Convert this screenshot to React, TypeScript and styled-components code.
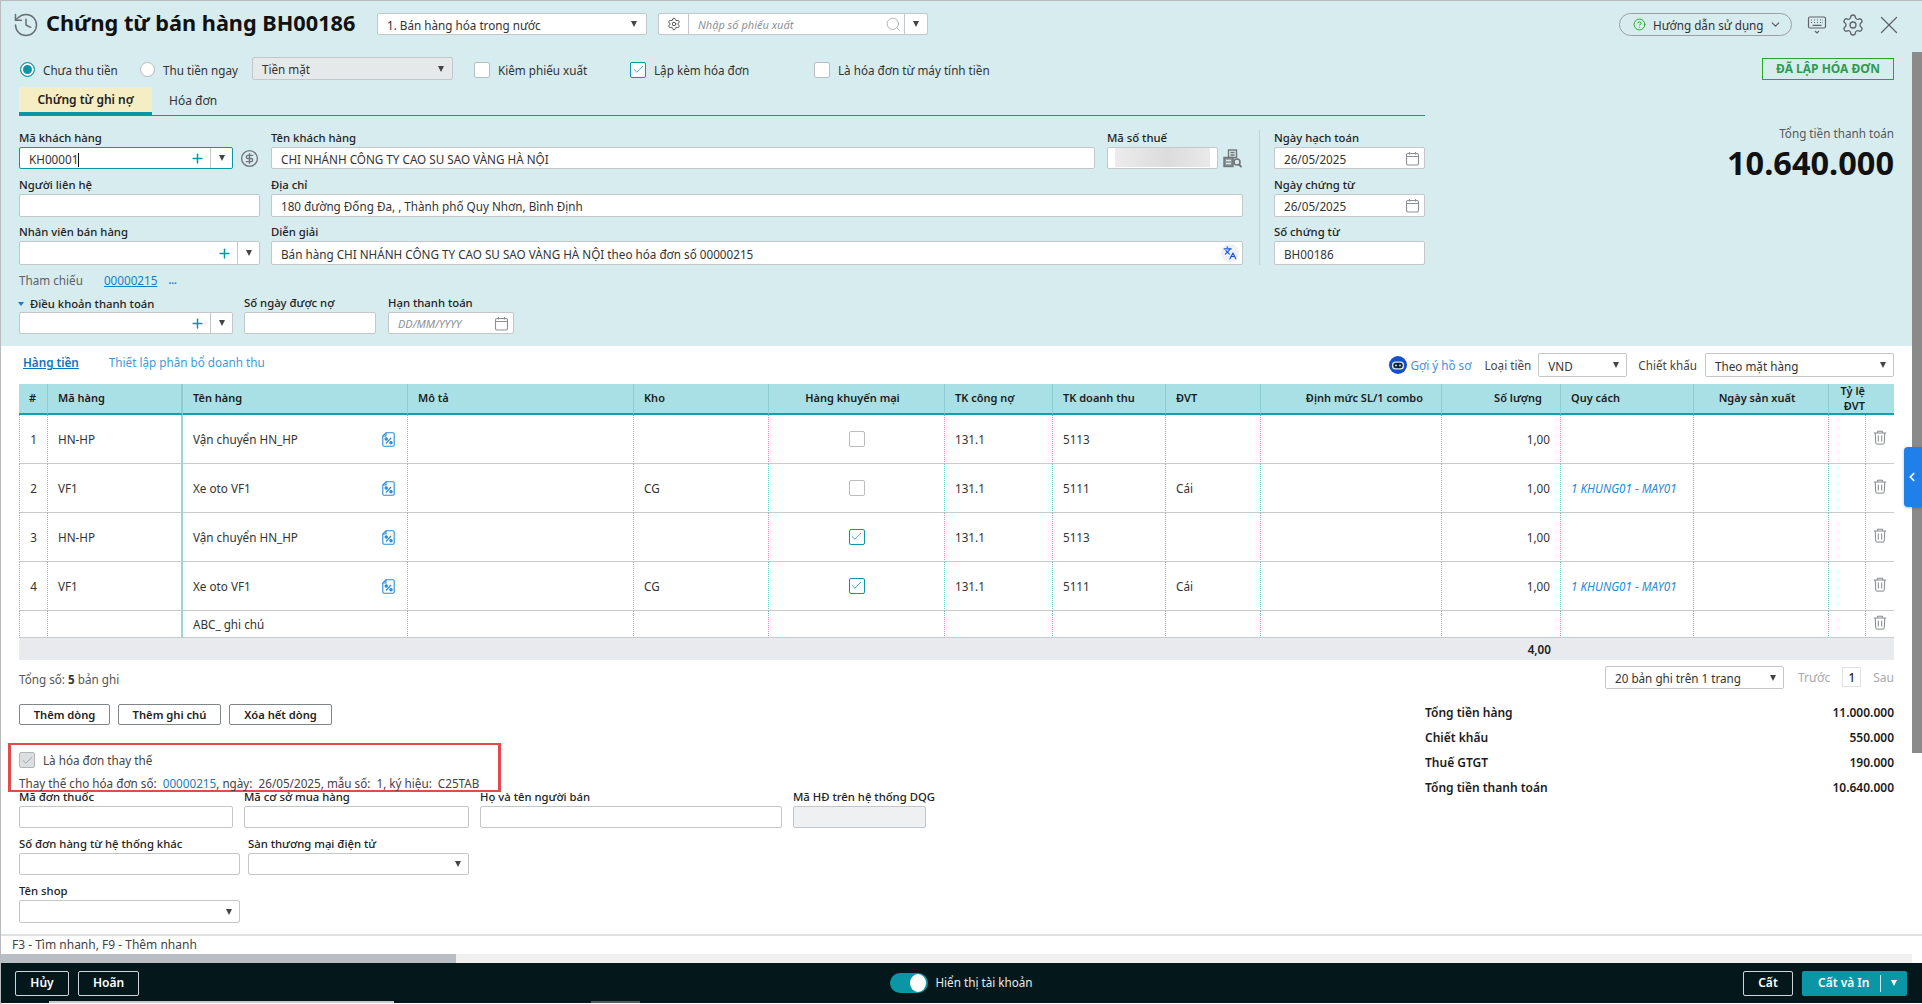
import React from "react";
import styled, { createGlobalStyle } from "styled-components";
import { History, Settings, X, CircleHelp, ChevronDown, ChevronLeft, Plus, Search, CircleDollarSign, Languages, Check } from "lucide-react";

const Global = createGlobalStyle`
  html, body { margin: 0; padding: 0; background: #fff; overflow: hidden; }
  body { font-family: "Noto Sans", "Open Sans", sans-serif; font-size: 11.7px; color: #212121; }
  * { box-sizing: border-box; }
  svg { flex: none; }
`;

const Page = styled.div`
  width: 1922px; height: 1004px; display: flex; flex-direction: column; overflow: hidden;
  position: relative; border-top: 1px solid #b9bcbe; border-left: 1px solid #b9bcbe; background: #fff;
`;
const TitleBar = styled.header`
  height: 51px; flex: none; background: #d7ecef; display: flex; align-items: flex-start;
  padding: 12px 25px 0 14px;
`;
const HistoryBtn = styled.span`
  width: 22px; height: 22px; margin: 1px 9px 0 0; color: #6a6f73; display: flex; align-items: center; justify-content: center;
`;
const Title = styled.h1`
  width: 331px; margin: -2px 0 0; font-size: 21.7px; line-height: 24px; font-weight: 700; color: #111; white-space: nowrap;
`;
const Box = styled.div<{ $w?: number; $h?: number; $focus?: boolean; $bg?: string }>`
  width: ${p => (p.$w ? p.$w + "px" : "100%")};
  height: ${p => p.$h ?? 22}px; flex: none; display: flex; align-items: center;
  background: ${p => p.$bg ?? "#fff"};
  border: 1px solid ${p => (p.$focus ? "#0b96a5" : "#c3c7ca")}; border-radius: 2px;
`;
const BoxText = styled.span<{ $muted?: boolean }>`
  flex: 1; min-width: 0; padding: 1px 9px 0; white-space: nowrap; overflow: hidden; font-size: 11.7px; line-height: 18px;
  ${p => (p.$muted ? "color: #8c9196; font-style: italic; font-size: 11px;" : "color: #333;")}
`;
const Caret = styled.i<{ $light?: boolean }>`
  display: block; flex: none; width: 0; height: 0; border-left: 3.5px solid transparent; border-right: 3.5px solid transparent;
  border-top: 6px solid ${p => (p.$light ? "#fff" : "#444")};
`;
const CaretSlot = styled.span<{ $w?: number; $line?: boolean }>`
  width: ${p => p.$w ?? 22}px; height: 100%; flex: none; display: flex; align-items: center; justify-content: center;
  ${p => (p.$line ? "border-left: 1px solid #c3c7ca;" : "")}
`;
const GearCell = styled.span`
  width: 30px; height: 100%; flex: none; display: flex; align-items: center; justify-content: center; color: #444;
  border-right: 1px solid #c3c7ca;
`;
const SearchCell = styled.span`
  flex: 1; height: 100%; display: flex; align-items: center; padding-right: 2px; color: #a4a9ad;
`;
const TopSelect = styled(Box)`margin-right: 11px;`;
const HelpPill = styled.div`
  margin-left: auto; width: 173px; height: 23px; border: 1px solid #9aa0a4; border-radius: 12px; display: flex; align-items: center;
  padding-left: 13px; color: #333; white-space: nowrap; font-size: 11.7px;
`;
const HelpText = styled.span`margin: 0 5px 0 7px;`;
const TopIcon = styled.span<{ $ml: number; $w: number }>`
  width: ${p => p.$w}px; height: 23px; margin-left: ${p => p.$ml}px; flex: none; color: #606468; display: flex; align-items: center; justify-content: center;
`;

const ScrollRow = styled.div`flex: 1; min-height: 0; display: flex;`;
const Content = styled.main`width: 1911px; flex: none; overflow: hidden;`;
const VScroll = styled.div`width: 10px; flex: none;`;
const VThumb = styled.div`height: 701px; background: #8a8a8a;`;

const Panel = styled.section`
  height: 294px; background: #d7ecef; padding: 5px 18px 0; 
`;
const Options = styled.div`height: 23px; padding-left: 1px; display: flex; align-items: center;`;
const OptionItem = styled.label<{ $w?: number; $ml?: number }>`
  ${p => (p.$w ? `width: ${p.$w}px;` : "")} margin-left: ${p => p.$ml ?? 0}px; padding-top: 2px;
  flex: none; display: flex; align-items: center; gap: 8px; color: #333; font-size: 11.7px; white-space: nowrap;
`;
const Radio = styled.span<{ $on?: boolean }>`
  width: 15px; height: 15px; flex: none; border-radius: 50%; background: ${p => (p.$on ? "#0b96a5" : "#fff")};
  border: 1px solid ${p => (p.$on ? "#0b96a5" : "#b5babd")};
  box-shadow: ${p => (p.$on ? "inset 0 0 0 2px #fff" : "none")};
`;
const Tick = styled.span<{ $on?: boolean; $off?: boolean }>`
  width: 16px; height: 16px; flex: none; border-radius: 2px; display: flex; align-items: center; justify-content: center;
  background: ${p => (p.$off ? "#dcdedf" : "#fff")};
  border: 1px solid ${p => (p.$on ? "#0b96a5" : p.$off ? "#b2b5b7" : "#b9bdc0")};
  color: ${p => (p.$off ? "#8f9396" : "#0b96a5")};
`;
const Badge = styled.div`
  margin-left: auto; width: 132px; height: 22px; border: 1px solid #2aa52a; display: flex; align-items: center; justify-content: center;
  color: #2f9a50; font-size: 12px; font-weight: 700; white-space: nowrap;
`;
const PanelBody = styled.div`display: flex;`;
const PanelLeft = styled.div`width: 1406px; flex: none;`;
const Tabs = styled.div`margin-top: 7px; height: 29px; border-bottom: 1px solid #0b96a5; display: flex;`;
const Tab = styled.div<{ $on?: boolean }>`
  height: 29px; display: flex; align-items: center; white-space: nowrap; font-size: 12px;
  ${p => (p.$on
    ? "width: 133px; justify-content: center; background: #f5eec4; font-weight: 600; color: #222; border-bottom: 4px solid #0b96a5; border-radius: 3px 3px 0 0;"
    : "margin-left: 17px; color: #333; padding-bottom: 2px;")}
`;
const FormCols = styled.div`margin-top: 14px; display: flex;`;
const FormMain = styled.div`width: 1224px; flex: none; display: flex; flex-direction: column; gap: 7.5px;`;
const VRule = styled.div`width: 1px; margin: 0 14px 0 16px; background: #bdd2d5; flex: none;`;
const FormSide = styled.div`width: 151px; flex: none; display: flex; flex-direction: column; gap: 7.5px;`;
const FormRow = styled.div`display: flex; align-items: flex-end;`;
const Field = styled.div<{ $w: number; $ml?: number }>`
  width: ${p => p.$w}px; flex: none; margin-left: ${p => p.$ml ?? 0}px;
`;
const Label = styled.div`
  height: 17px; line-height: 16px; font-size: 11.3px; font-weight: 500; color: #222; white-space: nowrap;
`;
const PlusBtn = styled.span`
  width: 22px; padding-right: 3px; flex: none; display: flex; justify-content: center; color: #0b96a5;
`;
const Sep = styled.span`width: 1px; height: 100%; background: #c3c7ca; flex: none;`;
const CaretMark = styled.span`display: inline-block; width: 1px; height: 14px; background: #111; vertical-align: -3px;`;
const SideIcon = styled.span<{ $w: number }>`
  width: ${p => p.$w}px; height: 22px; flex: none; display: flex; align-items: center; color: #6f7477;
`;
const Blur = styled.span`
  width: 95px; height: 19px; margin: -2px 0 0 7px; background: linear-gradient(90deg, #ececec, #dcdcdc 55%, #e9e9e9);
`;
const CalCell = styled.span`
  width: 24px; height: 100%; flex: none; display: flex; align-items: center; justify-content: center; color: #8c9196;
`;
const Translate = styled.span`
  width: 18px; height: 18px; flex: none; margin-right: 3px; border-radius: 50%; background: #eef0f3; color: #1a56d6;
  display: flex; align-items: center; justify-content: center;
`;
const RefRow = styled.div`margin-top: 7px; height: 16px; display: flex; align-items: center; color: #5c6266; font-size: 11.7px;`;
const RefLink = styled.a`margin-left: 21px; color: #1a7cc4; text-decoration: underline;`;
const RefMore = styled.span`margin-left: 11px; color: #1a7cc4; font-weight: 700; font-size: 10px;`;
const TermsRow = styled(FormRow)`margin-top: 7px;`;
const TermLabel = styled(Label)`display: flex; align-items: center; margin-left: -1px;`;
const TermMark = styled.i`
  display: block; width: 0; height: 0; margin-right: 6px; border-left: 3px solid transparent; border-right: 3px solid transparent; border-top: 4px solid #1a7cc4;
`;
const TotalBox = styled.div`flex: 1; padding-top: 45px; text-align: right;`;
const TotalCaption = styled.div`font-size: 11.7px; line-height: 16px; color: #55595c;`;
const TotalAmount = styled.div`margin-top: 2px; font-size: 32.5px; line-height: 40px; font-weight: 700; color: #111;`;

const GridBar = styled.div`height: 38px; padding: 0 18px 0 22px; display: flex; align-items: center;`;
const GridTab = styled.a<{ $on?: boolean }>`
  margin-right: 30px; white-space: nowrap; font-size: 11.7px; margin-top: -6px;
  ${p => (p.$on ? "color: #0b76bd; font-weight: 600; text-decoration: underline;" : "color: #3d9bd8;")}
`;
const BarRight = styled.div`margin-left: auto; display: flex; align-items: center; gap: 11px;`;
const Suggest = styled.div`display: flex; align-items: center; gap: 4px; margin-right: 2px; color: #3d8fe0; font-size: 11.7px; white-space: nowrap;`;
const BarGroup = styled.div<{ $gap: number }>`display: flex; align-items: center; gap: ${p => p.$gap}px; color: #444; white-space: nowrap; font-size: 11.7px;`;

const TableWrap = styled.div`padding: 0 18px;`;
const Grid = styled.table`
  width: 1875px; table-layout: fixed; border-collapse: separate; border-spacing: 0; font-size: 11.7px;
`;
const Th = styled.th<{ $align?: string; $bar?: boolean }>`
  height: 31px; background: #a9e0e5; border-bottom: 2px solid #0ea2b0; border-right: ${p => (p.$bar ? "2px solid #8fcdd2" : "1px solid #8fcdd2")};
  padding: 0 18px 0 10px; text-align: ${p => p.$align ?? "left"}; font-size: 11px; font-weight: 600; color: #1c1c1c; white-space: nowrap; overflow: hidden; line-height: 14.5px;
`;
const ThWrap = styled(Th)`padding: 0 1px; white-space: normal; text-align: right; overflow: hidden; border-right: none;`;
const Td = styled.td<{ $h: number; $align?: string; $bar?: boolean; $first?: boolean; $last?: boolean }>`
  height: ${p => p.$h}px; padding: 0 10px; text-align: ${p => p.$align ?? "left"}; color: #333; white-space: nowrap; overflow: hidden;
  border-bottom: 1px solid #c8cbce;
  ${p => (p.$first ? "border-left: 1px dotted #6fc0c9;" : "")}
  ${p => (p.$last ? "" : p.$bar ? "border-right: 2px solid #9ed3d8;" : "border-right: 1px dotted #6fc0c9;")}
`;
const TdIcon = styled(Td)`padding: 0;`;
const NameCell = styled.div`display: flex; align-items: center; justify-content: space-between; padding-right: 2px;`;
const TickCell = styled.div`display: flex; justify-content: center; padding-bottom: 1px;`;
const TrashCell = styled.div`display: flex; justify-content: center; color: #85898c; padding-bottom: 4px;`;
const LinkSpec = styled.span`color: #2a8bd0; font-style: italic;`;
const SumTd = styled.td<{ $align?: string }>`
  height: 22px; background: #e8eaee; padding: 0 10px; font-weight: 600; color: #222; text-align: ${p => p.$align ?? "left"};
`;

const Pager = styled.div`margin-top: 6px; height: 23px; padding: 0 18px; display: flex; align-items: center; color: #555;`;
const PagerCount = styled.span`margin-top: 2px;`;
const Strong = styled.b`font-weight: 700; color: #333;`;
const PagerRight = styled.div`margin-left: auto; display: flex; align-items: center;`;
const PagerDim = styled.span<{ $ml: number }>`margin-left: ${p => p.$ml}px; color: #a5a9ac; font-size: 12px;`;
const PageNum = styled.span`
  width: 19px; height: 20px; margin-left: 12px; border: 1px solid #dfe1e3; color: #222; display: flex; align-items: center; justify-content: center; margin-top: -2px; font-weight: 500;
`;
const BottomRow = styled.div`display: flex;`;
const BottomLeft = styled.div`width: 1423px; flex: none; padding-left: 18px;`;
const BtnRow = styled.div`margin-top: 15px; display: flex; gap: 8px;`;
const GhostBtn = styled.button<{ $w: number }>`
  height: 21px; padding: 0; width: ${p => p.$w}px; background: #fff; border: 1px solid #80858a; border-radius: 2px;
  font: 600 11.2px "Noto Sans", sans-serif; color: #222; white-space: nowrap;
`;
const RedBox = styled.div`
  position: relative; z-index: 1; margin: 18px 0 -3px -11px; width: 493px; height: 49px; border: 2px solid #e5484d; border-left-width: 3px; border-right-width: 3px; padding: 7px 0 0 8px;
`;
const RedLine = styled.div`display: flex; align-items: center; gap: 8px; color: #444; height: 16px;`;
const RedText = styled.div`margin-top: 7px; line-height: 16px; color: #444; white-space: nowrap;`;
const RedLink = styled.span`color: #1a7cc4;`;
const ExtraRow = styled(FormRow)`margin-bottom: 8px;`;
const Totals = styled.div`flex: 1; padding: 11px 0 0 1px; margin-right: 18px;`;
const TotalRow = styled.div`height: 25px; display: flex; align-items: center; justify-content: space-between; font-size: 12px; font-weight: 600; color: #1c1c1c;`;

const StatusRow = styled.div`
  height: 20px; flex: none; border-top: 2px solid #dfe1e2; padding: 0 0 2px 11px; display: flex; align-items: center; color: #444; font-size: 12px;
`;
const HScroll = styled.div`height: 9px; width: 1911px; flex: none; background: #f0f0f0;`;
const HThumb = styled.div`height: 9px; width: 455px; background: #b8bec4;`;
const Footer = styled.footer`
  height: 40px; flex: none; margin-bottom: 1px; position: relative; background: #04181b; display: grid; grid-template-columns: 1fr auto 1fr; align-items: center; padding: 0 15px 0 14px;
`;
const FooterLeft = styled.div`display: flex; gap: 9px;`;
const FooterRight = styled.div`display: flex; justify-self: end; gap: 9px;`;
const DarkBtn = styled.button<{ $w: number }>`
  width: ${p => p.$w}px; height: 25px; padding: 0 0 2px; background: transparent; border: 1px solid #cfd3d5; border-radius: 2px; color: #fff; font: 600 12px "Noto Sans", sans-serif;
`;
const PrimaryBtn = styled.div`
  width: 105px; height: 25px; background: #0b96a5; border-radius: 2px; color: #fff; font-size: 12px; font-weight: 600; display: flex; align-items: center; padding-left: 16px; white-space: nowrap;
`;
const PrimaryLabel = styled.span`margin-top: -2px;`;
const PrimaryRule = styled.span`width: 1px; height: 17px; margin-left: 11px; background: #cfeaee;`;
const PrimaryCaret = styled.span`flex: 1; display: flex; justify-content: center;`;
const ToggleWrap = styled.div`display: flex; align-items: center; gap: 7px; margin-left: 1px; color: #e8ecec; font-size: 11.7px; white-space: nowrap;`;
const Toggle = styled.span`
  width: 38px; height: 20px; border-radius: 10px; background: #0b96a5; display: flex; align-items: center; justify-content: flex-end; padding-right: 2px;
`;
const ToggleText = styled.span`margin-top: -2px;`;
const Knob = styled.span`width: 16px; height: 18px; border-radius: 50%; background: #fff;`;
const Streak = styled.span<{ $l: number; $w: number; $c: string }>`
  position: absolute; bottom: 0; left: ${p => p.$l}px; width: ${p => p.$w}px; height: 2px; background: ${p => p.$c};
`;
const DrawerTab = styled.div`
  position: absolute; right: 0; top: 446px; width: 18px; height: 60px; background: #2080ea; border-radius: 4px 0 0 4px; color: #fff;
  display: flex; align-items: center; justify-content: flex-start; padding-left: 1px; box-shadow: 0 1px 3px rgba(0,0,0,.25);
`;

const CalendarIcon = () => (
  <svg width="15" height="15" viewBox="0 0 15 15" fill="none" stroke="currentColor" strokeWidth="1.1">
    <rect x="1.5" y="2.5" width="12" height="11.5" rx="1.5" />
    <path d="M1.5 5.5h12M4.5 1v2.5M10.5 1v2.5" />
  </svg>
);
const KeyboardIcon = () => (
  <svg width="20" height="18" viewBox="0 0 19 18" fill="none" stroke="currentColor" strokeWidth="1.2">
    <rect x="1" y="1" width="17" height="11" rx="1.5" />
    <path d="M3.5 4h1M6.5 4h1M9.5 4h1M12.5 4h1M3.5 6.5h1M6.5 6.5h1M9.5 6.5h1M12.5 6.5h1M15 4h.5M15 6.5h.5M5 9.3h9" />
    <path d="M7.5 15l2 2 2-2" />
  </svg>
);
const TaxCodeIcon = () => (
  <svg width="20" height="19" viewBox="0 0 20 19" fill="none" stroke="#6f7477" strokeWidth="1.4">
    <rect x="5.5" y="1" width="8" height="7.5" />
    <path d="M7.5 3.5h4M7.5 6h4" />
    <rect x="1" y="8.5" width="9" height="9" fill="#8a8f92" />
    <path d="M3 11.5h5M3 14.5h5" stroke="#d7ecef" />
    <circle cx="14" cy="13" r="3" strokeWidth="1.6" />
    <path d="M16 15.5l2.5 2.5" strokeWidth="1.8" />
  </svg>
);
const PercentFile = () => (
  <svg width="13" height="15" viewBox="0 0 13 15" fill="none" stroke="#2b8bd6" strokeWidth="1.1">
    <path d="M4 .8h7a1.2 1.2 0 0 1 1.2 1.2v11a1.2 1.2 0 0 1-1.2 1.2H2A1.2 1.2 0 0 1 .8 13V4L4 .8z" />
    <path d="M4 .8V4H.8" />
    <path d="M4 11.5l5-5.5" strokeWidth="1.2" />
    <circle cx="4.2" cy="7" r="1.2" fill="#2b8bd6" />
    <circle cx="9" cy="10.8" r="1.2" fill="#2b8bd6" />
  </svg>
);
const TrashIcon = () => (
  <svg width="14" height="15" viewBox="0 0 14 15" fill="none" stroke="currentColor" strokeWidth="1">
    <path d="M.8 3h12.4M4.5 3V1.2h5V3M2.2 3l.6 10.2a1 1 0 0 0 1 .9h6.4a1 1 0 0 0 1-.9L11.8 3" />
    <path d="M5.3 5.5v6M8.7 5.5v6" />
  </svg>
);
const RobotIcon = () => (
  <svg width="18" height="18" viewBox="0 0 18 18">
    <circle cx="9" cy="9" r="9" fill="#1450c8" />
    <rect x="3" y="5.5" width="12" height="8" rx="3.5" fill="#dfe7f6" />
    <rect x="4.3" y="6.8" width="9.4" height="5.4" rx="2.7" fill="#12202e" />
    <circle cx="7" cy="9.5" r="1.1" fill="#9fd3f0" />
    <circle cx="11" cy="9.5" r="1.1" fill="#9fd3f0" />
  </svg>
);

const TinyCheck = () => <Check size={13} strokeWidth={1.4} />;

type FormSelectProps = { w?: number; h?: number; text?: string; bg?: string; slot?: number };
const FormSelect = ({ w, h, text, bg, slot = 20 }: FormSelectProps) => (
  <Box $w={w} $h={h} $bg={bg}>
    <BoxText>{text}</BoxText>
    <CaretSlot $w={slot}><Caret /></CaretSlot>
  </Box>
);
const Lookup = ({ h, text, focus, mark }: { h: number; text?: string; focus?: boolean; mark?: boolean }) => (
  <Box $h={h} $focus={focus}>
    <BoxText>{text}{mark && <CaretMark />}</BoxText>
    <PlusBtn><Plus size={15} strokeWidth={2.4} /></PlusBtn>
    <Sep />
    <CaretSlot $w={21}><Caret /></CaretSlot>
  </Box>
);
const DateInput = ({ h, text }: { h: number; text: string }) => (
  <Box $h={h}>
    <BoxText>{text}</BoxText>
    <CalCell><CalendarIcon /></CalCell>
  </Box>
);

const colWidths = [29, 135, 225, 226, 135, 176, 108, 113, 95, 181, 119, 133, 135, 37, 28];
const headers: { t: string; a?: string; bar?: boolean }[] = [
  { t: "#", a: "center" }, { t: "Mã hàng", bar: true }, { t: "Tên hàng" }, { t: "Mô tả" }, { t: "Kho" },
  { t: "Hàng khuyến mại", a: "center" }, { t: "TK công nợ" }, { t: "TK doanh thu" }, { t: "ĐVT" },
  { t: "Định mức SL/1 combo", a: "right" }, { t: "Số lượng", a: "right" }, { t: "Quy cách" }, { t: "Ngày sản xuất", a: "center" },
];
const rows = [
  { n: "1", h: 49, code: "HN-HP", name: "Vận chuyển HN_HP", kho: "", km: false, dt: "5113", dvt: "", spec: "" },
  { n: "2", h: 49, code: "VF1", name: "Xe oto VF1", kho: "CG", km: false, dt: "5111", dvt: "Cái", spec: "1 KHUNG01 - MAY01" },
  { n: "3", h: 49, code: "HN-HP", name: "Vận chuyển HN_HP", kho: "", km: true, dt: "5113", dvt: "", spec: "" },
  { n: "4", h: 49, code: "VF1", name: "Xe oto VF1", kho: "CG", km: true, dt: "5111", dvt: "Cái", spec: "1 KHUNG01 - MAY01" },
];

export default function App() {
  return (
    <Page>
      <Global />
      <TitleBar>
        <HistoryBtn><History size={28} strokeWidth={1.3} /></HistoryBtn>
        <Title>Chứng từ bán hàng BH00186</Title>
        <TopSelect $w={270} $h={22}>
          <BoxText>1. Bán hàng hóa trong nước</BoxText>
          <CaretSlot $w={24}><Caret /></CaretSlot>
        </TopSelect>
        <Box $w={270} $h={22}>
          <GearCell><Settings size={14} strokeWidth={1.5} /></GearCell>
          <SearchCell>
            <BoxText $muted>Nhập số phiếu xuất</BoxText>
            <Search size={17} strokeWidth={1.2} />
          </SearchCell>
          <CaretSlot $w={23} $line><Caret /></CaretSlot>
        </Box>
        <HelpPill>
          <CircleHelp size={13} color="#2aa52a" strokeWidth={1.8} />
          <HelpText>Hướng dẫn sử dụng</HelpText>
          <ChevronDown size={13} strokeWidth={2} color="#555" />
        </HelpPill>
        <TopIcon $ml={15} $w={19}><KeyboardIcon /></TopIcon>
        <TopIcon $ml={17} $w={19}><Settings size={24} strokeWidth={1.3} /></TopIcon>
        <TopIcon $ml={19} $w={16}><X size={30} strokeWidth={1} /></TopIcon>
      </TitleBar>

      <ScrollRow>
        <Content>
          <Panel>
            <Options>
              <OptionItem $w={120}><Radio $on />Chưa thu tiền</OptionItem>
              <OptionItem $w={112}><Radio />Thu tiền ngay</OptionItem>
              <Box $w={201} $h={23} $bg="#e6e9ea">
                <BoxText>Tiền mặt</BoxText>
                <CaretSlot><Caret /></CaretSlot>
              </Box>
              <OptionItem $w={156} $ml={21}><Tick />Kiêm phiếu xuất</OptionItem>
              <OptionItem $w={184}><Tick $on><TinyCheck /></Tick>Lập kèm hóa đơn</OptionItem>
              <OptionItem><Tick />Là hóa đơn từ máy tính tiền</OptionItem>
              <Badge>ĐÃ LẬP HÓA ĐƠN</Badge>
            </Options>
            <PanelBody>
              <PanelLeft>
                <Tabs>
                  <Tab $on>Chứng từ ghi nợ</Tab>
                  <Tab>Hóa đơn</Tab>
                </Tabs>
                <FormCols>
                  <FormMain>
                    <FormRow>
                      <Field $w={214}><Label>Mã khách hàng</Label><Lookup h={22} text="KH00001" focus mark /></Field>
                      <SideIcon $w={38} style={{ paddingLeft: 7 }}><CircleDollarSign size={19} strokeWidth={1.7} /></SideIcon>
                      <Field $w={824}>
                        <Label>Tên khách hàng</Label>
                        <Box><BoxText>CHI NHÁNH CÔNG TY CAO SU SAO VÀNG HÀ NỘI</BoxText></Box>
                      </Field>
                      <Field $w={111} $ml={12}>
                        <Label>Mã số thuế</Label>
                        <Box><Blur /></Box>
                      </Field>
                      <SideIcon $w={25} style={{ paddingLeft: 5 }}><TaxCodeIcon /></SideIcon>
                    </FormRow>
                    <FormRow>
                      <Field $w={241}><Label>Người liên hệ</Label><Box $h={23} /></Field>
                      <Field $w={972} $ml={11}>
                        <Label>Địa chỉ</Label>
                        <Box $h={23}><BoxText>180 đường Đống Đa, , Thành phố Quy Nhơn, Bình Định</BoxText></Box>
                      </Field>
                    </FormRow>
                    <FormRow>
                      <Field $w={241}><Label>Nhân viên bán hàng</Label><Lookup h={24} /></Field>
                      <Field $w={972} $ml={11}>
                        <Label>Diễn giải</Label>
                        <Box $h={24}>
                          <BoxText>Bán hàng CHI NHÁNH CÔNG TY CAO SU SAO VÀNG HÀ NỘI theo hóa đơn số 00000215</BoxText>
                          <Translate><Languages size={14} strokeWidth={2} /></Translate>
                        </Box>
                      </Field>
                    </FormRow>
                  </FormMain>
                  <VRule />
                  <FormSide>
                    <Field $w={151}><Label>Ngày hạch toán</Label><DateInput h={22} text="26/05/2025" /></Field>
                    <Field $w={151}><Label>Ngày chứng từ</Label><DateInput h={23} text="26/05/2025" /></Field>
                    <Field $w={151}><Label>Số chứng từ</Label><Box $h={24}><BoxText>BH00186</BoxText></Box></Field>
                  </FormSide>
                </FormCols>
                <RefRow>
                  Tham chiếu
                  <RefLink>00000215</RefLink>
                  <RefMore>...</RefMore>
                </RefRow>
                <TermsRow>
                  <Field $w={214}>
                    <TermLabel><TermMark />Điều khoản thanh toán</TermLabel>
                    <Lookup h={22} />
                  </Field>
                  <Field $w={132} $ml={11}><Label>Số ngày được nợ</Label><Box /></Field>
                  <Field $w={126} $ml={12}>
                    <Label>Hạn thanh toán</Label>
                    <Box>
                      <BoxText $muted>DD/MM/YYYY</BoxText>
                      <CalCell><CalendarIcon /></CalCell>
                    </Box>
                  </Field>
                </TermsRow>
              </PanelLeft>
              <TotalBox>
                <TotalCaption>Tổng tiền thanh toán</TotalCaption>
                <TotalAmount>10.640.000</TotalAmount>
              </TotalBox>
            </PanelBody>
          </Panel>

          <GridBar>
            <GridTab $on>Hàng tiền</GridTab>
            <GridTab>Thiết lập phân bổ doanh thu</GridTab>
            <BarRight>
              <Suggest><RobotIcon />Gợi ý hồ sơ</Suggest>
              <BarGroup $gap={7}>Loại tiền<FormSelect w={89} h={24} text="VND" /></BarGroup>
              <BarGroup $gap={8}>Chiết khấu<FormSelect w={189} h={24} text="Theo mặt hàng" /></BarGroup>
            </BarRight>
          </GridBar>

          <TableWrap>
            <Grid>
              <colgroup>{colWidths.map((w, i) => <col key={i} width={w} />)}</colgroup>
              <thead>
                <tr>
                  {headers.map((h, i) => <Th key={i} $align={h.a} $bar={h.bar}>{h.t}</Th>)}
                  <ThWrap>Tỷ lệ ĐVT</ThWrap>
                  <ThWrap />
                </tr>
              </thead>
              <tbody>
                {rows.map(r => (
                  <tr key={r.n}>
                    <Td $h={r.h} $align="center" $first>{r.n}</Td>
                    <Td $h={r.h} $bar>{r.code}</Td>
                    <Td $h={r.h}><NameCell>{r.name}<PercentFile /></NameCell></Td>
                    <Td $h={r.h} />
                    <Td $h={r.h}>{r.kho}</Td>
                    <TdIcon $h={r.h}>
                      <TickCell><Tick $on={r.km}>{r.km && <TinyCheck />}</Tick></TickCell>
                    </TdIcon>
                    <Td $h={r.h}>131.1</Td>
                    <Td $h={r.h}>{r.dt}</Td>
                    <Td $h={r.h}>{r.dvt}</Td>
                    <Td $h={r.h} />
                    <Td $h={r.h} $align="right">1,00</Td>
                    <Td $h={r.h}><LinkSpec>{r.spec}</LinkSpec></Td>
                    <Td $h={r.h} />
                    <Td $h={r.h} />
                    <TdIcon $h={r.h} $last><TrashCell><TrashIcon /></TrashCell></TdIcon>
                  </tr>
                ))}
                <tr>
                  <Td $h={27} $first />
                  <Td $h={27} $bar />
                  <Td $h={27}>ABC_ ghi chú</Td>
                  {Array.from({ length: 11 }).map((_, i) => <Td key={i} $h={27} />)}
                  <TdIcon $h={27} $last><TrashCell><TrashIcon /></TrashCell></TdIcon>
                </tr>
                <tr>
                  <SumTd colSpan={10} />
                  <SumTd $align="right">4,00</SumTd>
                  <SumTd colSpan={4} />
                </tr>
              </tbody>
            </Grid>
          </TableWrap>

          <Pager>
            <PagerCount>Tổng số: <Strong>5</Strong> bản ghi</PagerCount>
            <PagerRight>
              <FormSelect w={179} h={23} text="20 bản ghi trên 1 trang" />
              <PagerDim $ml={14}>Trước</PagerDim>
              <PageNum>1</PageNum>
              <PagerDim $ml={12}>Sau</PagerDim>
            </PagerRight>
          </Pager>

          <BottomRow>
            <BottomLeft>
              <BtnRow>
                <GhostBtn $w={91}>Thêm dòng</GhostBtn>
                <GhostBtn $w={103}>Thêm ghi chú</GhostBtn>
                <GhostBtn $w={103}>Xóa hết dòng</GhostBtn>
              </BtnRow>
              <RedBox>
                <RedLine><Tick $off><TinyCheck /></Tick>Là hóa đơn thay thế</RedLine>
                <RedText>
                  Thay thế cho hóa đơn số:&nbsp; <RedLink>00000215</RedLink>, ngày:&nbsp; 26/05/2025, mẫu số:&nbsp; 1, ký hiệu:&nbsp; C25TAB
                </RedText>
              </RedBox>
              <ExtraRow>
                <Field $w={214}><Label>Mã đơn thuốc</Label><Box /></Field>
                <Field $w={225} $ml={11}><Label>Mã cơ sở mua hàng</Label><Box /></Field>
                <Field $w={302} $ml={11}><Label>Họ và tên người bán</Label><Box /></Field>
                <Field $w={133} $ml={11}><Label>Mã HĐ trên hệ thống DQG</Label><Box $bg="#eef0f1" /></Field>
              </ExtraRow>
              <ExtraRow>
                <Field $w={221}><Label>Số đơn hàng từ hệ thống khác</Label><Box /></Field>
                <Field $w={221} $ml={8}><Label>Sàn thương mại điện tử</Label><FormSelect h={22} /></Field>
              </ExtraRow>
              <ExtraRow>
                <Field $w={221}><Label>Tên shop</Label><FormSelect h={23} /></Field>
              </ExtraRow>
            </BottomLeft>
            <Totals>
              <TotalRow><span>Tổng tiền hàng</span><span>11.000.000</span></TotalRow>
              <TotalRow><span>Chiết khấu</span><span>550.000</span></TotalRow>
              <TotalRow><span>Thuế GTGT</span><span>190.000</span></TotalRow>
              <TotalRow><span>Tổng tiền thanh toán</span><span>10.640.000</span></TotalRow>
            </Totals>
          </BottomRow>
        </Content>
        <VScroll><VThumb /></VScroll>
      </ScrollRow>

      <StatusRow>F3 - Tìm nhanh, F9 - Thêm nhanh</StatusRow>
      <HScroll><HThumb /></HScroll>
      <Footer>
        <FooterLeft>
          <DarkBtn $w={54}>Hủy</DarkBtn>
          <DarkBtn $w={61}>Hoãn</DarkBtn>
        </FooterLeft>
        <ToggleWrap><Toggle><Knob /></Toggle><ToggleText>Hiển thị tài khoản</ToggleText></ToggleWrap>
        <FooterRight>
          <DarkBtn $w={50}>Cất</DarkBtn>
          <PrimaryBtn>
            <PrimaryLabel>Cất và In</PrimaryLabel>
            <PrimaryRule />
            <PrimaryCaret><Caret $light /></PrimaryCaret>
          </PrimaryBtn>
        </FooterRight>
        <Streak $l={48} $w={345} $c="#c8cacc" />
        <Streak $l={590} $w={49} $c="#555a5c" />
      </Footer>
      <DrawerTab><ChevronLeft size={14} strokeWidth={3} /></DrawerTab>
    </Page>
  );
}
